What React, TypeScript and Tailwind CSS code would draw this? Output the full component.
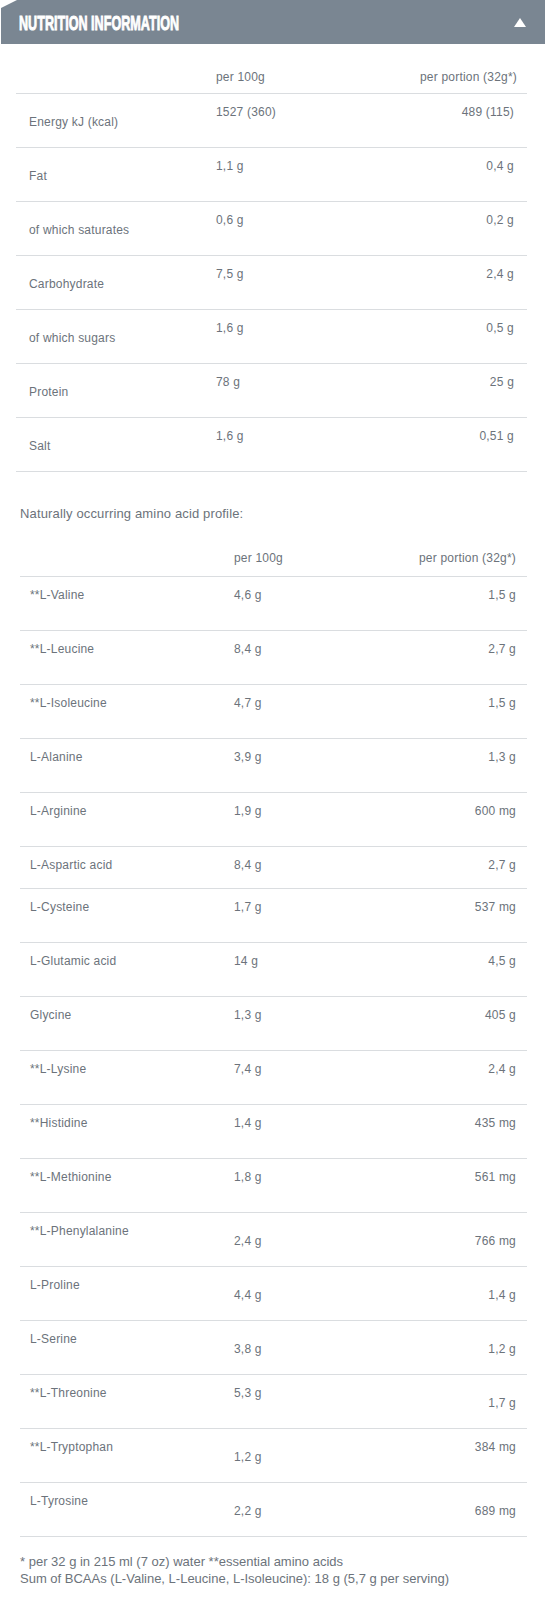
import React from "react";

type P = "t" | "b";
const pad = (p: P) => (p === "t" ? "pt-[10px]" : "pt-[20px]");

const t1: [string, string, string][] = [
  ["Energy kJ (kcal)", "1527 (360)", "489 (115)"],
  ["Fat", "1,1 g", "0,4 g"],
  ["of which saturates", "0,6 g", "0,2 g"],
  ["Carbohydrate", "7,5 g", "2,4 g"],
  ["of which sugars", "1,6 g", "0,5 g"],
  ["Protein", "78 g", "25 g"],
  ["Salt", "1,6 g", "0,51 g"],
];

const t2: [string, string, string, P, P, P, number][] = [
  ["**L-Valine", "4,6 g", "1,5 g", "t", "t", "t", 54],
  ["**L-Leucine", "8,4 g", "2,7 g", "t", "t", "t", 54],
  ["**L-Isoleucine", "4,7 g", "1,5 g", "t", "t", "t", 54],
  ["L-Alanine", "3,9 g", "1,3 g", "t", "t", "t", 54],
  ["L-Arginine", "1,9 g", "600 mg", "t", "t", "t", 54],
  ["L-Aspartic acid", "8,4 g", "2,7 g", "t", "t", "t", 42],
  ["L-Cysteine", "1,7 g", "537 mg", "t", "t", "t", 54],
  ["L-Glutamic acid", "14 g", "4,5 g", "t", "t", "t", 54],
  ["Glycine", "1,3 g", "405 g", "t", "t", "t", 54],
  ["**L-Lysine", "7,4 g", "2,4 g", "t", "t", "t", 54],
  ["**Histidine", "1,4 g", "435 mg", "t", "t", "t", 54],
  ["**L-Methionine", "1,8 g", "561 mg", "t", "t", "t", 54],
  ["**L-Phenylalanine", "2,4 g", "766 mg", "t", "b", "b", 54],
  ["L-Proline", "4,4 g", "1,4 g", "t", "b", "b", 54],
  ["L-Serine", "3,8 g", "1,2 g", "t", "b", "b", 54],
  ["**L-Threonine", "5,3 g", "1,7 g", "t", "t", "b", 54],
  ["**L-Tryptophan", "1,2 g", "384 mg", "t", "b", "t", 54],
  ["L-Tyrosine", "2,2 g", "689 mg", "t", "b", "b", 54],
];

export default function App() {
  return (
    <div className="w-[545px] bg-white font-['Liberation_Sans',Arial,sans-serif] text-[12px] leading-[16px] text-[#6c737b] pb-[12px]">
      <div className="h-[44px] bg-[#7a8692] flex items-center justify-between pl-[19px] pr-[19px] [clip-path:polygon(17px_0,100%_0,100%_100%,1px_100%,1px_8px)]">
        <span className="inline-block origin-left scale-x-[0.6] text-white font-bold text-[21px] leading-none whitespace-nowrap [-webkit-text-stroke:0.9px_#ffffff]">
          NUTRITION INFORMATION
        </span>
        <svg width="12" height="9" viewBox="0 0 12 9">
          <polygon points="6,0 12,9 0,9" fill="#ffffff" />
        </svg>
      </div>

      <div className="ml-[16px] w-[511px] tracking-[0.2px]">
        <div className="h-[50px] border-b border-[#dadde0] grid grid-cols-[187px_1fr_auto] items-end pl-[13px] pr-[10px] pb-[8px]">
          <span></span>
          <span>per 100g</span>
          <span className="text-right">per portion (32g*)</span>
        </div>
        {t1.map(([l, a, b]) => (
          <div key={l} className="h-[54px] border-b border-[#dadde0] grid grid-cols-[187px_1fr_auto] items-start pl-[13px] pr-[13px]">
            <span className="pt-[20px]">{l}</span>
            <span className="pt-[10px]">{a}</span>
            <span className="pt-[10px] text-right">{b}</span>
          </div>
        ))}
      </div>

      <p className="mt-[34px] ml-[20px] text-[13px] tracking-[0.15px]">Naturally occurring amino acid profile:</p>

      <div className="ml-[20px] w-[507px] tracking-[0.2px]">
        <div className="h-[55px] border-b border-[#dadde0] grid grid-cols-[204px_1fr_auto] items-end pl-[10px] pr-[11px] pb-[10px]">
          <span></span>
          <span>per 100g</span>
          <span className="text-right">per portion (32g*)</span>
        </div>
        {t2.map(([l, a, b, pl, pa, pb, h]) => (
          <div
            key={l}
            className={`${h === 42 ? "h-[42px]" : "h-[54px]"} border-b border-[#dadde0] grid grid-cols-[204px_1fr_auto] items-start pl-[10px] pr-[11px]`}
          >
            <span className={pad(pl)}>{l}</span>
            <span className={pad(pa)}>{a}</span>
            <span className={`${pad(pb)} text-right`}>{b}</span>
          </div>
        ))}
      </div>

      <div className="mt-[16px] ml-[20px] text-[13px] leading-[17px]">
        <p>* per 32 g in 215 ml (7 oz) water **essential amino acids</p>
        <p>Sum of BCAAs (L-Valine, L-Leucine, L-Isoleucine): 18 g (5,7 g per serving)</p>
      </div>
    </div>
  );
}
